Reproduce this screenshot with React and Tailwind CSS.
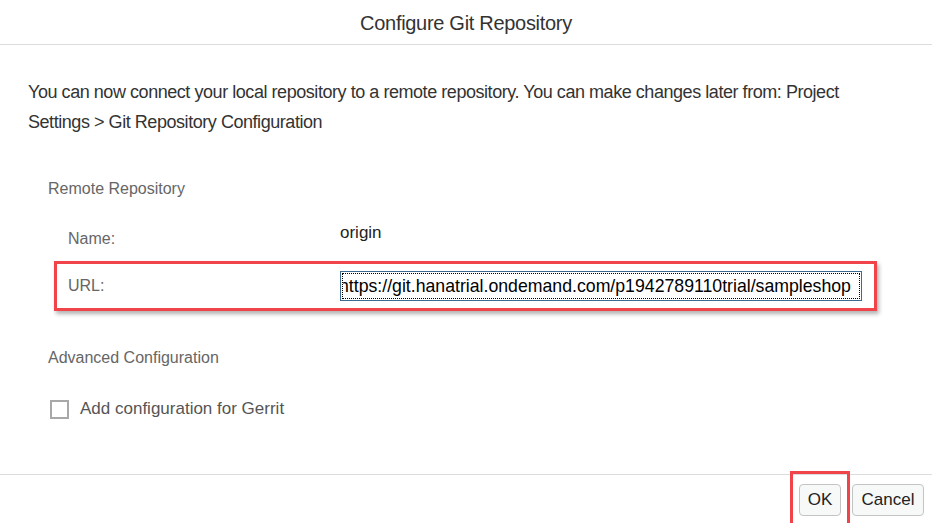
import React from "react";

export default function App() {
    return (
        <div className="w-[932px] h-[523px] bg-white overflow-hidden flex flex-col font-['Liberation_Sans',Arial,sans-serif]">
            <div className="h-[45px] shrink-0 border-b border-[#dcdcdc] flex items-center justify-center">
                <h1 className="text-[20px] tracking-[-0.3px] text-[#333] pt-[1px]">Configure Git Repository</h1>
            </div>

            <div className="flex-1 px-[28px]">
                <p className="mt-[32px] text-[18px] tracking-[-0.45px] leading-[30px] text-[#333] w-[870px]">
                    You can now connect your local repository to a remote repository. You can make changes later from: Project Settings &gt; Git Repository Configuration
                </p>

                <div className="mt-[42px] pl-[20px] text-[16px] text-[#666] leading-[20px]">Remote Repository</div>

                <div className="mt-[28px] flex items-start">
                    <div className="w-[312px] pl-[40px] pt-[2px] text-[16px] text-[#666] leading-[20px]">Name:</div>
                    <div className="text-[17px] text-[#222] leading-[20px] -mt-[4px]">origin</div>
                </div>

                <div className="mt-[12px] ml-[26px] w-[823px] h-[50px] border-[3px] border-[#f0434a] shadow-[2px_3px_4px_rgba(0,0,0,0.3)] flex items-center">
                    <div className="w-[283px] pl-[11px] text-[16px] text-[#666] leading-[20px]">URL:</div>
                    <div className="w-[522px] h-[30px] border border-[#3d6a93] p-[1px]">
                        <div className="h-full border border-dotted border-black overflow-hidden flex items-center">
                            <span className="whitespace-nowrap text-[17.7px] text-black -ml-[4px]">https://git.hanatrial.ondemand.com/p1942789110trial/sampleshop</span>
                        </div>
                    </div>
                </div>

                <div className="mt-[37px] pl-[20px] text-[16px] text-[#666] leading-[20px]">Advanced Configuration</div>

                <div className="mt-[31px] pl-[22px] flex items-center gap-[11px]">
                    <div className="w-[19px] h-[19px] border-2 border-[#a8a8a8] bg-white"></div>
                    <span className="text-[17px] text-[#555] leading-[20px]">Add configuration for Gerrit</span>
                </div>
            </div>

            <div className="h-[49px] shrink-0 border-t border-[#dcdcdc] flex items-start justify-end pr-[8px] gap-[2px]">
                <div className="mt-[-4px] w-[60px] h-[56px] border-[3px] border-[#f0434a] flex items-start justify-center pt-[10px]">
                    <button className="w-[42px] h-[32px] rounded-[4px] border border-[#c4c4c4] bg-[#f7f8f8] text-[17px] text-[#222]">OK</button>
                </div>
                <button className="mt-[9px] w-[72px] h-[32px] rounded-[4px] border border-[#c4c4c4] bg-[#f7f8f8] text-[17px] text-[#222]">Cancel</button>
            </div>
        </div>
    );
}
